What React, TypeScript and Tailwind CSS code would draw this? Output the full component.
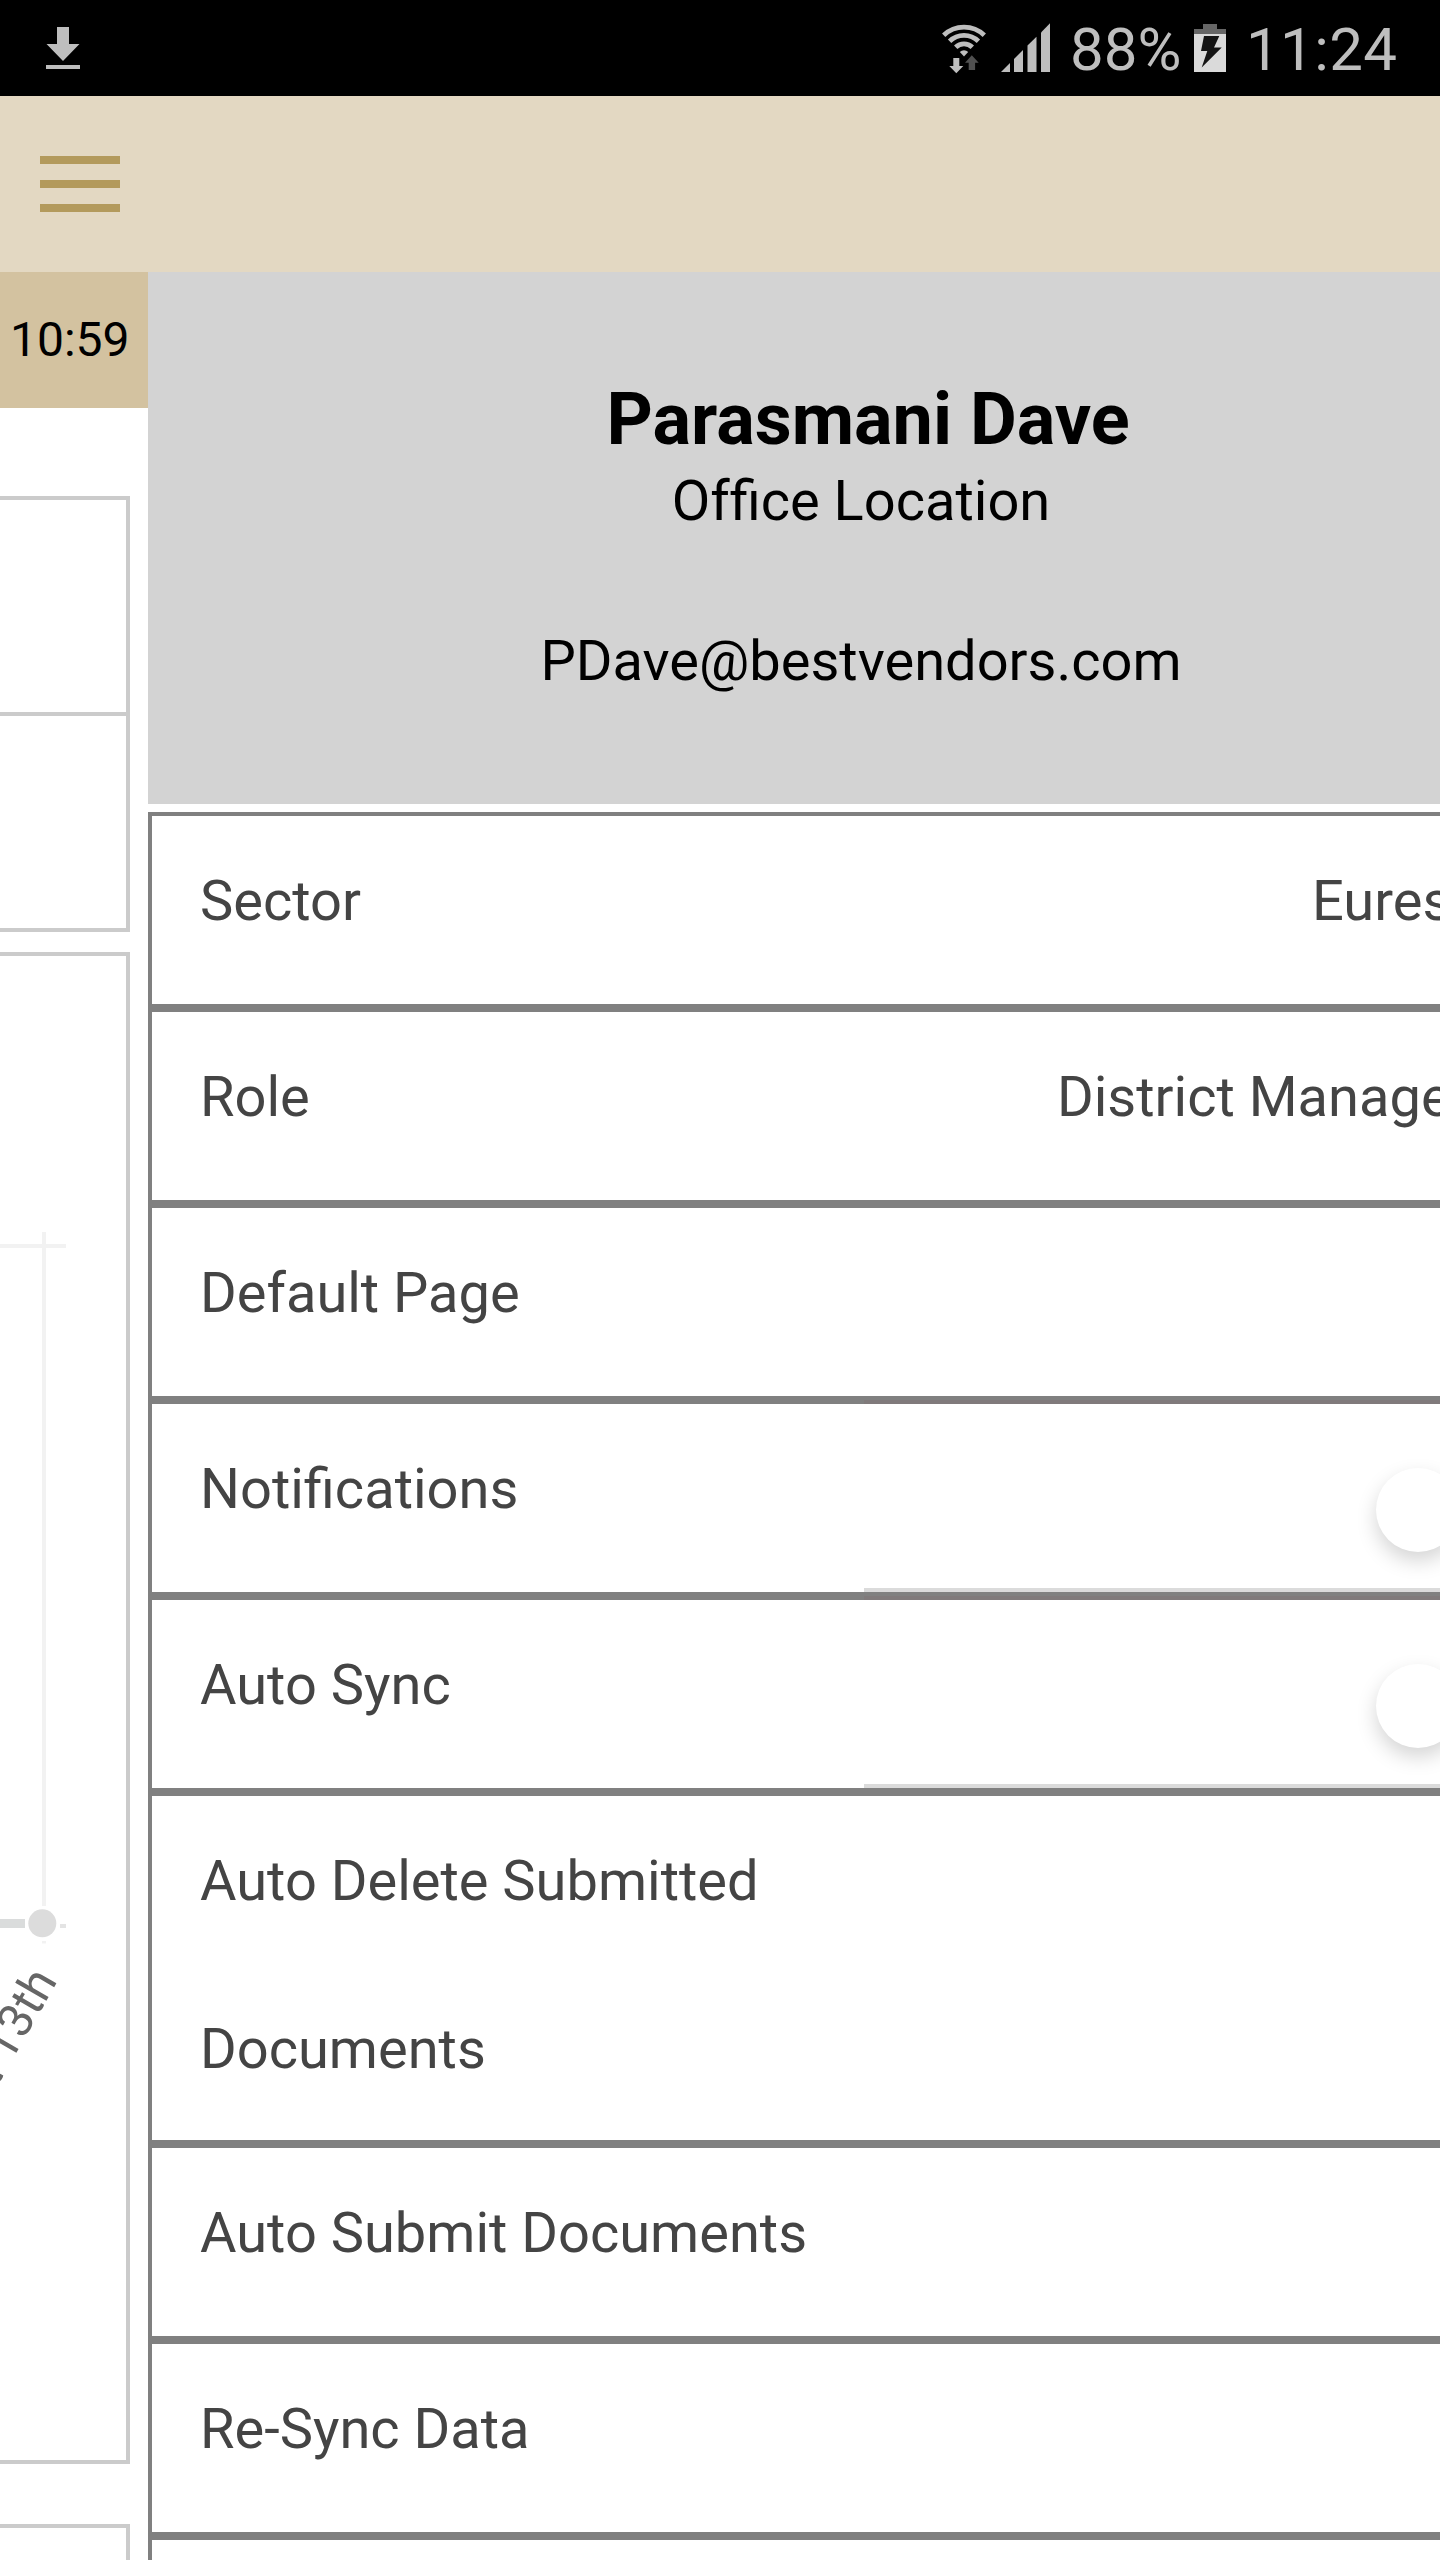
import type { ReactNode } from "react";

function DownloadIcon() {
  return (
    <svg className="block h-[42px] w-[34px]" viewBox="0 0 34 42" fill="#bebebe">
      <path d="M11 0H23V17H33.5L17 34L0.5 17H11Z" />
      <path d="M0 38H34V42H0Z" />
    </svg>
  );
}

function WifiIcon() {
  return (
    <svg className="block h-[51px] w-[44px]" viewBox="0 0 44 51">
      <g fill="none" stroke="#bebebe" strokeWidth="4.8">
        <path d="M1.7 12.2A29.5 29.5 0 0 1 42.3 12.2" />
        <path d="M7.6 18.2A20.6 20.6 0 0 1 36.4 18.2" />
        <path d="M13.7 24.2A11.8 11.8 0 0 1 30.3 24.2" />
      </g>
      <path d="M17.8 29A6 6 0 0 1 26.2 29L22 33.5Z" fill="#bebebe" />
      <path d="M11.3 35H17.3V43H21.3L14.3 50.3L7.3 43H11.3Z" fill="#bebebe" />
      <path d="M26.7 47H33.1V39.7H36.7L29.8 32.3L23 39.7H26.7Z" fill="#505050" />
    </svg>
  );
}

function SignalIcon() {
  return (
    <svg className="block h-[49px] w-[49px]" viewBox="0 0 49 49" fill="#bebebe">
      <path d="M0 49L9 40V49Z" />
      <path d="M13 49V36L22 27V49Z" />
      <path d="M26.5 49V22.5L35.5 13.8V49Z" />
      <path d="M40 49V9.5L49 0.3V49Z" />
    </svg>
  );
}

function BatteryIcon() {
  return (
    <svg className="block h-[48px] w-[32px]" viewBox="0 0 32 48">
      <path d="M9 0H23V5H32V10H0V5H9Z" fill="#666666" />
      <path d="M0 10H32V48H0Z" fill="#dadada" />
      <path d="M10 12H25.3L20 23.5H27.7L7.7 43.5L13.3 27H7Z" fill="#141414" />
    </svg>
  );
}

function StatusBar() {
  return (
    <div className="flex h-24 shrink-0 items-start justify-between bg-black text-[60px] leading-[96px] text-[#bebebe]">
      <div className="pt-[27px] pl-[46px]">
        <DownloadIcon />
      </div>
      <div className="flex items-start pr-[41px]">
        <div className="mr-[15px] pt-[23px]">
          <WifiIcon />
        </div>
        <div className="pt-[23px]">
          <SignalIcon />
        </div>
        <span className="w-[144px] pt-[2px] pl-[20px]">88%</span>
        <div className="pt-6">
          <BatteryIcon />
        </div>
        <span className="w-[173px] pt-[2px] pl-[20px] tracking-[0.4px]">11:24</span>
      </div>
    </div>
  );
}

function Trend() {
  return (
    <svg className="mt-[276px] block h-[940px] w-[126px]" viewBox="0 1232 126 940">
      <path d="M0 1246H66M44 1232V1906M44 1941V1943.5" stroke="#000000" strokeOpacity="0.05" strokeWidth="4" />
      <path d="M60 1926H66" stroke="#e4e4e4" strokeWidth="4" />
      <path d="M0 1923.5H25" stroke="#dadcdc" strokeWidth="9" />
      <circle cx="42.3" cy="1923.3" r="14" fill="#dcdcdc" />
      <text transform="translate(58 1980.5) rotate(-60)" textAnchor="end" fontSize="48" fill="#666666">
        Oct 13th
      </text>
    </svg>
  );
}

function Dashboard() {
  return (
    <div className="flex w-[148px] shrink-0 flex-col overflow-hidden">
      <div className="h-[136px] shrink-0 bg-[#d3c2a0] pl-[10px] text-[48px] leading-[135px] text-black">10:59</div>
      <div className="mt-[88px] h-[436px] w-[130px] shrink-0 border-y-4 border-r-4 border-[#cbcbcb]">
        <div className="h-[216px] border-b-4 border-[#cbcbcb]" />
      </div>
      <div className="mt-5 h-[1512px] w-[130px] shrink-0 border-y-4 border-r-4 border-[#cbcbcb]">
        <Trend />
      </div>
      <div className="mt-[60px] h-20 w-[130px] shrink-0 border-y-4 border-r-4 border-[#cbcbcb]" />
    </div>
  );
}

function Toggle() {
  return (
    <div className="relative flex w-[576px] shrink-0 justify-end border-b-4 border-[#dbdbdb]">
      <div className="absolute -top-1 left-0 h-1 w-full bg-[#807a7b]" />
      <div className="mt-16 -mr-5 size-[84px] rounded-full bg-white shadow-[0_9px_20px_rgba(0,0,0,0.17)]" />
    </div>
  );
}

type RowProps = { label: ReactNode; value?: string; valueClass?: string; tall?: boolean; toggle?: boolean };

function Row({ label, value, valueClass, tall, toggle }: RowProps) {
  return (
    <div
      className={
        "flex shrink-0 justify-between border-y-4 border-l-4 border-[#808080] pl-12 leading-[168px] " +
        (tall ? "h-[352px]" : "h-[196px]")
      }
    >
      <div className="pt-px">{label}</div>
      {value && <div className={"shrink-0 pt-px whitespace-nowrap " + valueClass}>{value}</div>}
      {toggle && <Toggle />}
    </div>
  );
}

function Profile() {
  return (
    <div className="flex min-w-0 flex-1 flex-col overflow-hidden">
      <div className="h-[532px] shrink-0 bg-[#d3d3d3] pt-[104px] text-black">
        <div className="w-[1426px] text-center">
          <div className="pl-[14px] text-[72px] leading-[88px] font-bold">Parasmani Dave</div>
          <div className="mt-px text-[56px] leading-[72px]">Of{"\u200c"}fice Location</div>
          <div className="mt-[88px] text-[56px] leading-[72px]">PDave@bestvendors.com</div>
        </div>
      </div>
      <div className="mt-2 flex flex-col text-[56px] text-[#444444]">
        <Row label="Sector" value="Eurest" valueClass="w-[128px]" />
        <Row label="Role" value="District Manager" valueClass="w-[383px]" />
        <Row label="Default Page" />
        <Row label="Notifications" toggle />
        <Row label="Auto Sync" toggle />
        <Row
          tall
          label={
            <>
              Auto Delete Submitted
              <br />
              Documents
            </>
          }
        />
        <Row label="Auto Submit Documents" />
        <Row label="Re-Sync Data" />
        <Row label="" />
      </div>
    </div>
  );
}

export default function App() {
  return (
    <div className="flex h-[2560px] w-[1440px] flex-col overflow-hidden bg-white font-['Roboto',sans-serif]">
      <StatusBar />
      <header className="flex h-44 shrink-0 flex-col gap-4 bg-[#e3d8c2] pt-[60px] pl-10">
        <div className="h-2 w-20 bg-[#b39a5c]" />
        <div className="h-2 w-20 bg-[#b39a5c]" />
        <div className="h-2 w-20 bg-[#b39a5c]" />
      </header>
      <main className="flex h-[2288px] shrink-0 overflow-hidden">
        <Dashboard />
        <Profile />
      </main>
    </div>
  );
}
